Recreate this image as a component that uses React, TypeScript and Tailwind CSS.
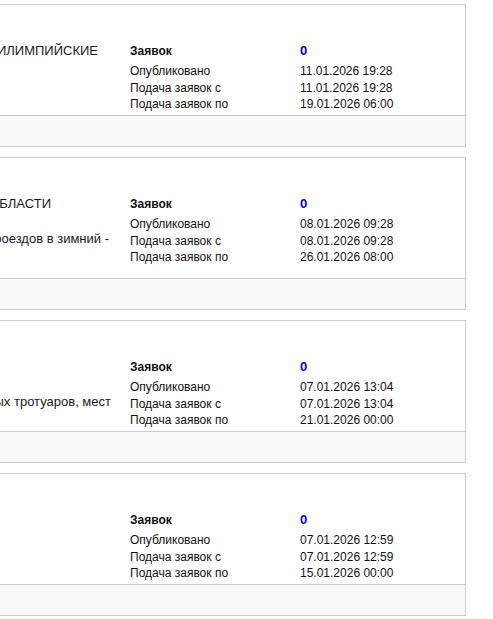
import React from 'react';

type Notice = {
  id: number;
  org: string;
  orgPad: string;
  title: { text: string; pad: string }[];
  published: string;
  from: string;
  to: string;
};

// only the right-hand tail of each title is on screen, so lines are pinned by their end
const notices: Notice[] = [
  {
    id: 1,
    org: 'БЮДЖЕТНОЕ УЧРЕЖДЕНИЕ ЦЕНТР ПОДГОТОВКИ ИЛИМПИЙСКИЕ',
    orgPad: 'pr-[32px]',
    title: [{ text: 'Поставка спортивного инвентаря', pad: 'pr-[180px]' }],
    published: '11.01.2026 19:28',
    from: '11.01.2026 19:28',
    to: '19.01.2026 06:00',
  },
  {
    id: 2,
    org: 'АДМИНИСТРАЦИЯ ГОРОДСКОГО ОКРУГА МОСКОВСКОЙ ОБЛАСТИ',
    orgPad: 'pr-[79px]',
    title: [
      { text: 'Выполнение работ по содержанию дорог и проездов в зимний -', pad: 'pr-[21px]' },
      { text: 'летний период 2026 года', pad: 'pr-[180px]' },
    ],
    published: '08.01.2026 09:28',
    from: '08.01.2026 09:28',
    to: '26.01.2026 08:00',
  },
  {
    id: 3,
    org: 'МУНИЦИПАЛЬНОЕ КАЗЁННОЕ УЧРЕЖДЕНИЕ',
    orgPad: 'pr-[180px]',
    title: [{ text: 'Выполнение работ по уборке пешеходных тротуаров, мест', pad: 'pr-[19px]' }],
    published: '07.01.2026 13:04',
    from: '07.01.2026 13:04',
    to: '21.01.2026 00:00',
  },
  {
    id: 4,
    org: 'ГОСУДАРСТВЕННОЕ УЧРЕЖДЕНИЕ',
    orgPad: 'pr-[180px]',
    title: [{ text: 'Оказание услуг', pad: 'pr-[180px]' }],
    published: '07.01.2026 12:59',
    from: '07.01.2026 12:59',
    to: '15.01.2026 00:00',
  },
];

const NoticeCard = ({ notice }: { notice: Notice }) => (
  <div className="mb-[10px] border border-[#cbcbcb] bg-white">
    <div className="flex pt-[37px]">
      <div className="w-[629px] shrink-0 pb-[14px] text-[13px] text-[#1a1a1a]">
        <div className={`whitespace-nowrap text-right leading-[18px] ${notice.orgPad}`}>{notice.org}</div>
        <div className="whitespace-nowrap text-right leading-[17px] pr-[180px]">Заказчик</div>
        {notice.title.map((line, i) => (
          <div key={i} className={`whitespace-nowrap text-right leading-[17px] ${line.pad}`}>
            {line.text}
          </div>
        ))}
      </div>
      <div className="flex-1 pb-[2px]">
        <div className="grid grid-cols-[170px_1fr] text-[12px] text-[#111]">
          <div className="mb-[3px] font-bold leading-[18px]">Заявок</div>
          <div className="mb-[3px] text-[13px] font-bold leading-[18px] text-[#0000ee]">0</div>
          <div className="leading-[17px]">Опубликовано</div>
          <div className="leading-[17px]">{notice.published}</div>
          <div className="leading-[16px]">Подача заявок с</div>
          <div className="leading-[16px]">{notice.from}</div>
          <div className="leading-[17px]">Подача заявок по</div>
          <div className="leading-[17px]">{notice.to}</div>
        </div>
      </div>
    </div>
    <div className="h-[31px] border-t border-[#cbcbcb] bg-[#f9f9f9]" />
  </div>
);

export default function App() {
  return (
    <div className="min-h-screen w-full overflow-hidden bg-white pt-1 font-['Liberation_Sans',Arial,sans-serif]">
      <div className="-ml-[500px] w-[966px]">
        {notices.map((n) => (
          <NoticeCard key={n.id} notice={n} />
        ))}
      </div>
    </div>
  );
}
